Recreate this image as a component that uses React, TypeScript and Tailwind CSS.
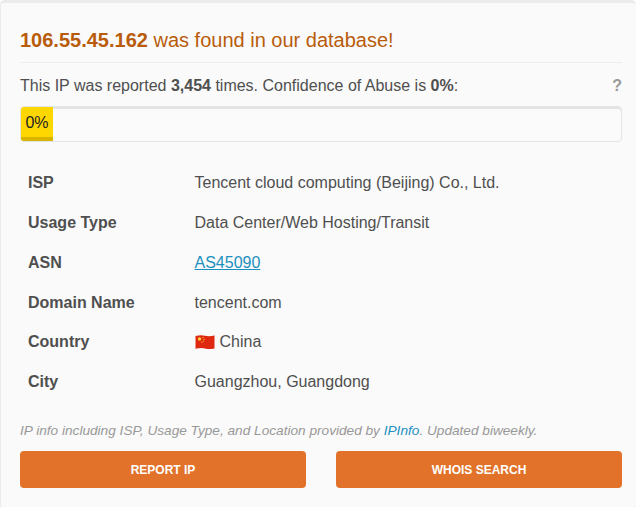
const ROWS = [
  { label: 'ISP', value: 'Tencent cloud computing (Beijing) Co., Ltd.' },
  { label: 'Usage Type', value: 'Data Center/Web Hosting/Transit' },
  { label: 'ASN', value: 'AS45090', link: true },
  { label: 'Domain Name', value: 'tencent.com' },
  { label: 'Country', value: 'China', flag: true },
  { label: 'City', value: 'Guangzhou, Guangdong' },
]

function ChinaFlag() {
  return (
    <svg width="20" height="16" viewBox="0 0 20 16" className="mr-[5px] inline-block shrink-0">
      <path d="M0.5 2 Q6 0.8 10 1.8 T19.5 1.5 V14.5 Q14 15.5 10 14.5 T0.5 14.8 Z" fill="#de2910" />
      <circle cx="4.5" cy="5" r="1.7" fill="#ffcf30" />
      <circle cx="8" cy="3.5" r="0.6" fill="#ffcf30" />
      <circle cx="9" cy="5.2" r="0.6" fill="#ffcf30" />
      <circle cx="8.6" cy="7" r="0.6" fill="#ffcf30" />
      <circle cx="7" cy="8.2" r="0.6" fill="#ffcf30" />
    </svg>
  )
}

function ActionButton({ label }: { label: string }) {
  return (
    <a className="flex h-[37px] flex-1 items-center justify-center rounded-[4px] bg-[#e2722a] text-[12px] font-bold text-white">
      {label}
    </a>
  )
}

export default function App() {
  return (
    <div className="h-[507px] w-[636px] overflow-hidden bg-white font-['Liberation_Sans',Arial,sans-serif] text-[16px] text-[#4f4f4f]">
      <div className="h-[510px] rounded-[5px] border-[3px] border-[#ebebeb] border-r-0 border-l-[1px] bg-[#fafafa] pt-[24px] pr-[14px] pl-[19px]">
        {/* Heading */}
        <h3 className="border-b border-[#eeeeee] pb-[9px] text-[20px] leading-[26px] text-[#b85c0c]">
          <b>106.55.45.162</b> was found in our database!
        </h3>

        {/* Reports line */}
        <div className="mt-[13px] flex items-center justify-between leading-[20px]">
          <p>
            This IP was reported <b>3,454</b> times. Confidence of Abuse is <b>0%</b>:
          </p>
          <span className="font-bold text-[#999999]">?</span>
        </div>

        {/* Confidence bar */}
        <div className="mt-[10px] h-[36px] overflow-hidden rounded-[4px] border border-[#e4e4e4] bg-[#fbfbfb] shadow-[inset_0_2px_0_#e4e4e4]">
          <div className="flex h-full w-[32px] items-center justify-center border-b-[4px] border-[#d9b400] bg-[#ffd700] pt-[2px] text-[16px] text-[#222222]">
            0%
          </div>
        </div>

        {/* Details */}
        <div className="mt-[21px] grid grid-cols-[166.5px_1fr] auto-rows-[39.8px] items-center pt-[0.3px] pl-[8px]">
          {ROWS.map((row) => (
            <div key={row.label} className="contents">
              <div className="font-bold">{row.label}</div>
              <div className="flex items-center">
                {row.flag && <ChinaFlag />}
                {row.link ? (
                  <a className="text-[#1c90c0] underline">{row.value}</a>
                ) : (
                  row.value
                )}
              </div>
            </div>
          ))}
        </div>

        {/* Attribution */}
        <p className="mt-[19px] text-[13.65px] leading-[20px] text-[#999999] italic">
          IP info including ISP, Usage Type, and Location provided by{' '}
          <a className="text-[#1c90c0]">IPInfo</a>. Updated biweekly.
        </p>

        {/* Buttons */}
        <div className="mt-[10px] flex gap-[30px]">
          <ActionButton label="REPORT IP" />
          <ActionButton label="WHOIS SEARCH" />
        </div>
      </div>
    </div>
  )
}
